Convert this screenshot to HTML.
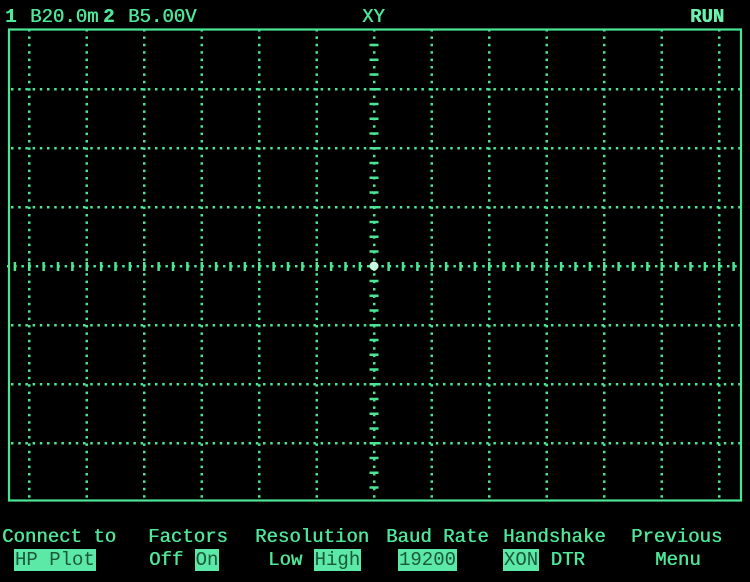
<!DOCTYPE html>
<html><head><meta charset="utf-8"><style>
html,body{margin:0;padding:0;background:#000;width:750px;height:582px;overflow:hidden}
body{position:relative;font-family:"Liberation Mono",monospace;color:#4fe699}
.t{position:absolute;font-size:19px;line-height:20px;white-space:pre;text-shadow:0.5px 0 0 #4fe699}
.h{background:#5ce8a6;color:#1a5a3a;padding:0 1px;text-shadow:none}
</style></head><body>
<svg id="g" width="750" height="582" style="position:absolute;left:0;top:0"></svg>
<div class="t" style="left:5px;top:7px;font-weight:bold">1</div>
<div class="t" style="left:30px;top:7px">B20.0m</div>
<div class="t" style="left:103px;top:7px;font-weight:bold">2</div>
<div class="t" style="left:128px;top:7px">B5.00V</div>
<div class="t" style="left:362px;top:7px">XY</div>
<div class="t" style="left:690px;top:7px;font-weight:bold;color:#6ff0b0">RUN</div>
<div class="t" style="left:2px;top:527px">Connect to</div>
<div class="t" style="left:14px;top:550px"><span class="h">HP Plot</span></div>
<div class="t" style="left:148px;top:527px">Factors</div>
<div class="t" style="left:149px;top:550px">Off <span class="h">On</span></div>
<div class="t" style="left:255px;top:527px">Resolution</div>
<div class="t" style="left:268px;top:550px">Low <span class="h">High</span></div>
<div class="t" style="left:386px;top:527px">Baud Rate</div>
<div class="t" style="left:398px;top:550px"><span class="h">19200</span></div>
<div class="t" style="left:503px;top:527px">Handshake</div>
<div class="t" style="left:503px;top:550px"><span class="h">XON</span> DTR</div>
<div class="t" style="left:631px;top:527px">Previous</div>
<div class="t" style="left:655px;top:550px">Menu</div>
<script>
var s='',C='#4be594';
s+='<rect x="9" y="29.5" width="732" height="471" fill="none" stroke="'+C+'" stroke-width="2.2"/>';
for(var k=-6;k<=6;k++){if(!k)continue;var x=374+57.5*k;
 for(var y=30;y<500;y+=7.4)s+='<rect x="'+(x-1)+'" y="'+(y-1)+'" width="2.5" height="2.5" fill="'+C+'"/>';}
for(var k=-3;k<=3;k++){if(!k)continue;var y=266+59*k;
 for(var x=12;x<740;x+=7.2)s+='<rect x="'+(x-1)+'" y="'+(y-1)+'" width="2.5" height="2.5" fill="'+C+'"/>';}
for(var x=8;x<742;x+=7.2)s+='<rect x="'+(x-1)+'" y="265" width="2.5" height="2.5" fill="'+C+'"/>';
for(var y=30;y<500;y+=7.4)s+='<rect x="373" y="'+(y-1)+'" width="2.5" height="2.5" fill="'+C+'"/>';
for(var i=-26;i<=26;i++){var x=374+14.375*i;if(x<10||x>740)continue;s+='<rect x="'+(x-1)+'" y="262" width="2.5" height="9" fill="'+C+'"/>';}
for(var i=-16;i<=16;i++){var y=266+14.75*i;if(y<31||y>499)continue;s+='<rect x="369.5" y="'+(y-1)+'" width="9" height="2.5" fill="'+C+'"/>';}
s+='<circle cx="374" cy="266" r="4.5" fill="#c8ffe0"/>';
document.getElementById('g').innerHTML=s;
</script>
</body></html>
